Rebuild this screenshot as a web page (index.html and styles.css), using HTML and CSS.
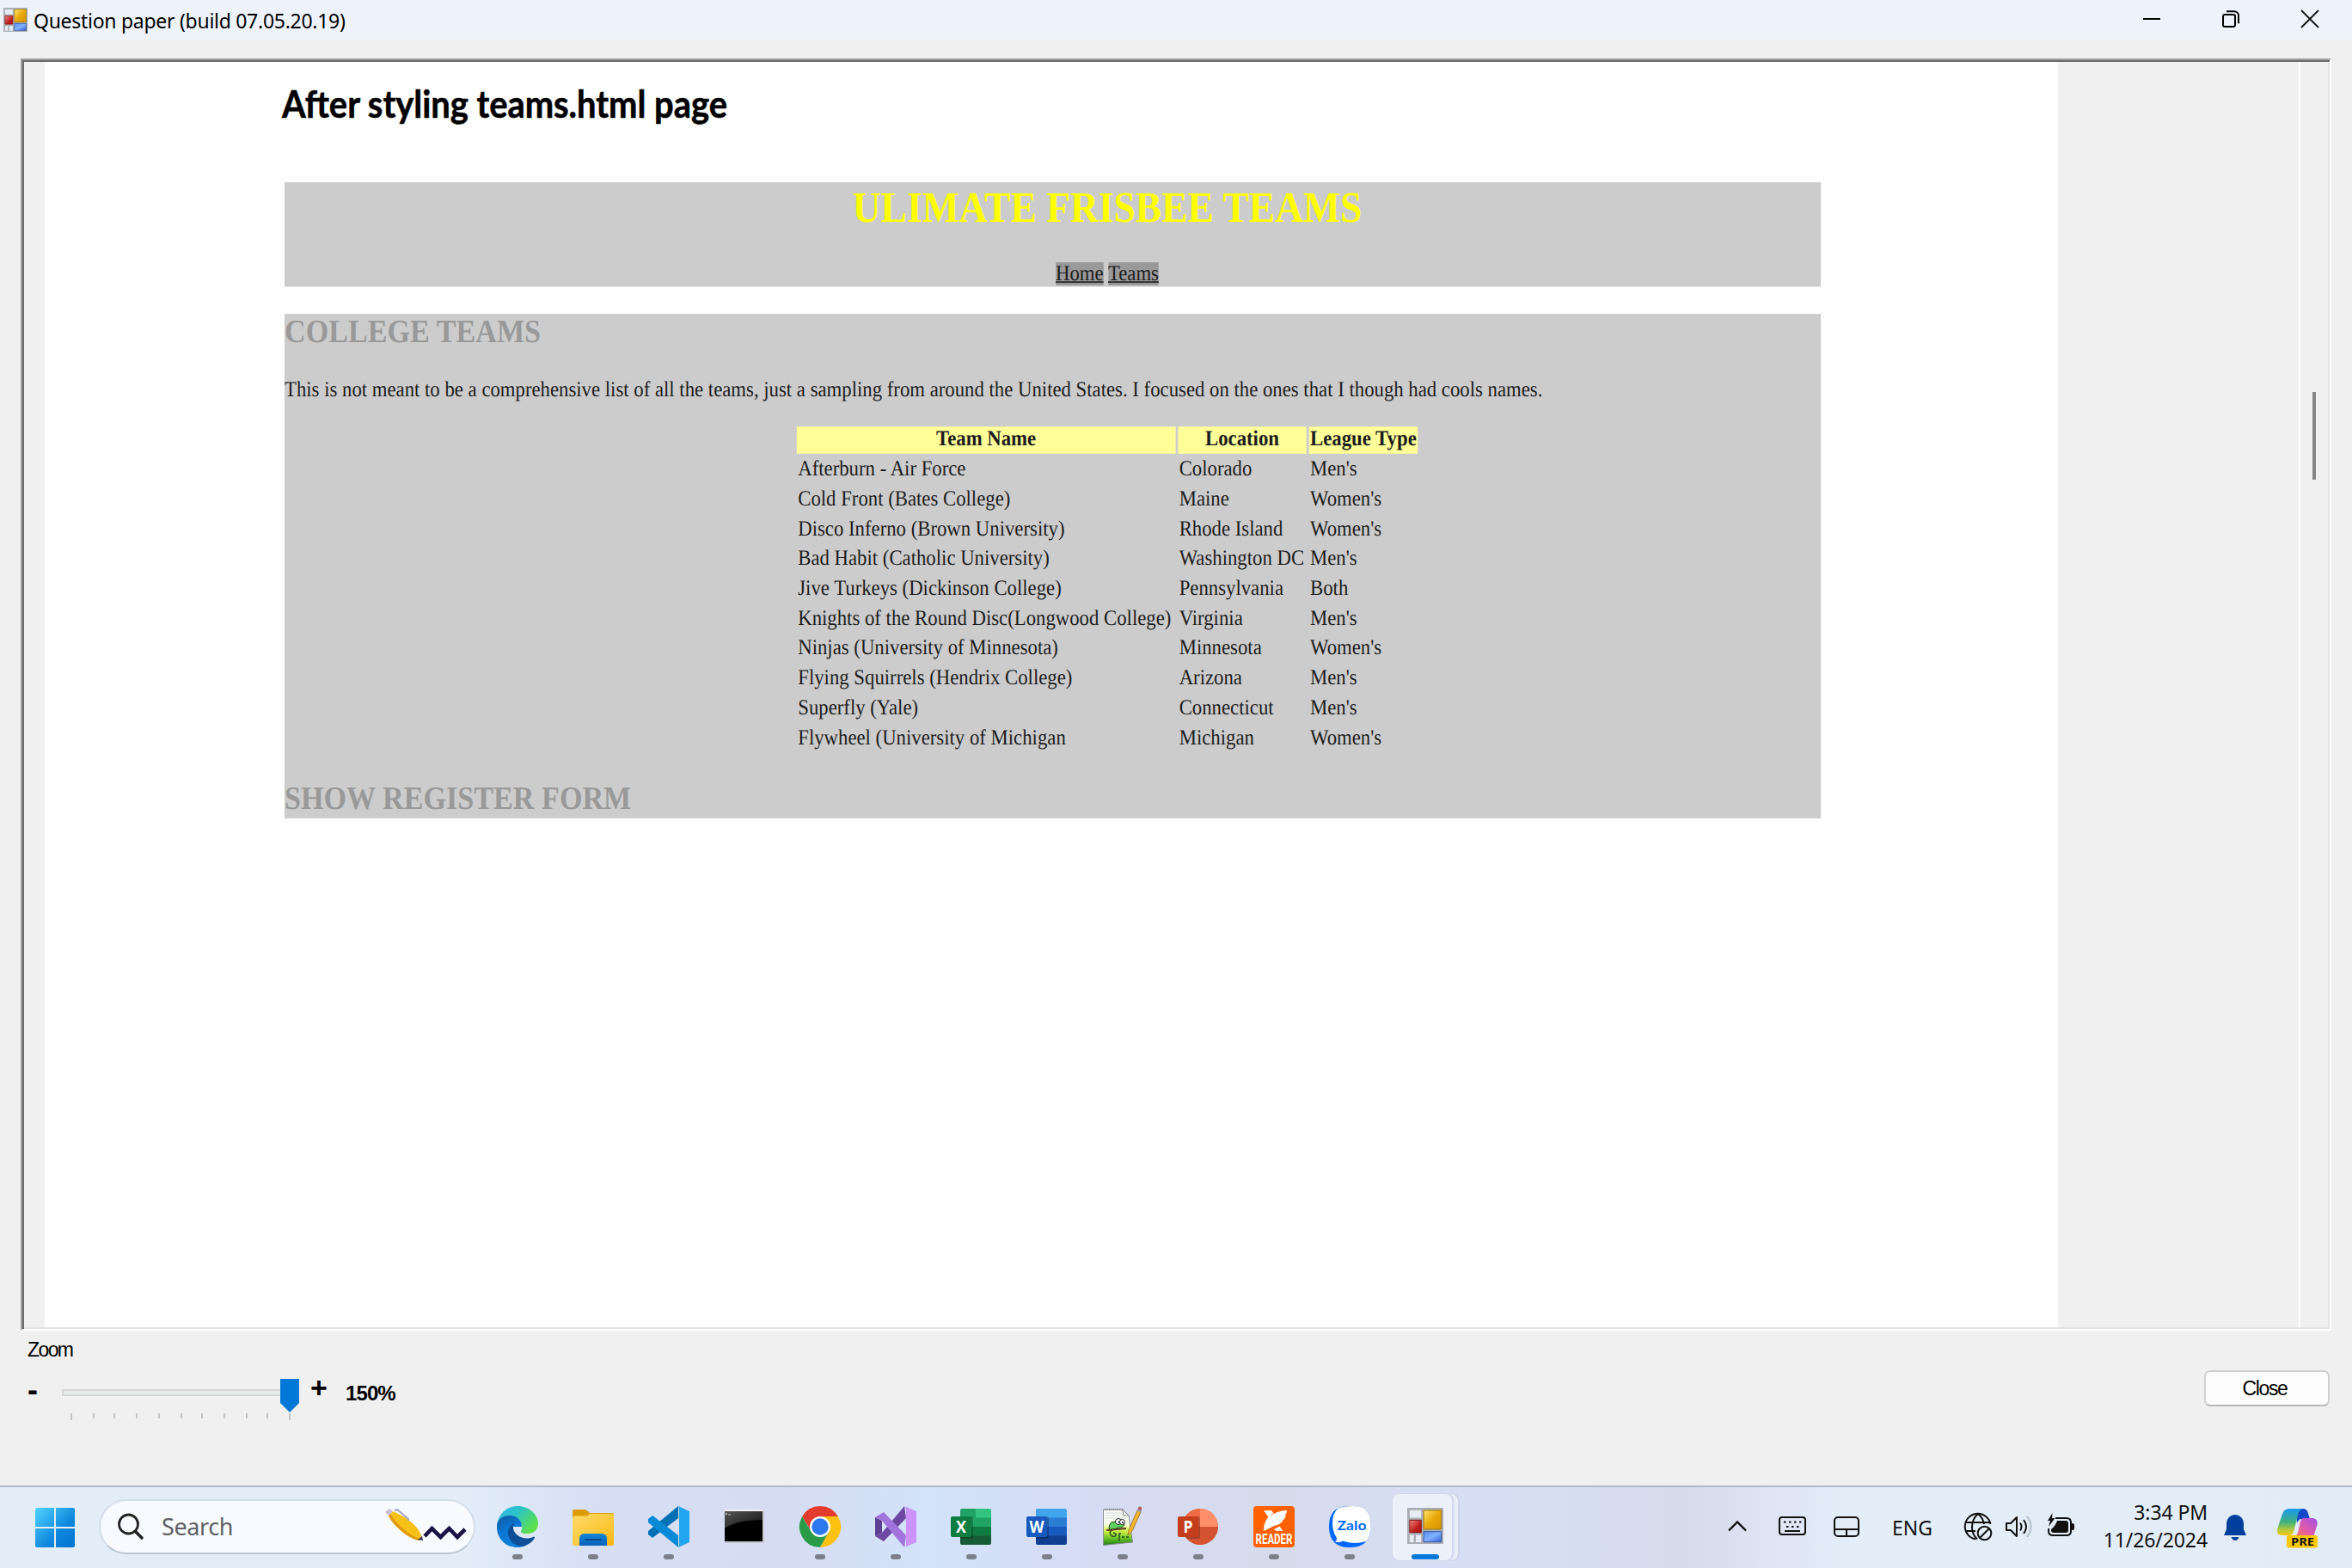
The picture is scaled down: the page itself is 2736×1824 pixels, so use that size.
FILE: index.html
```
<!DOCTYPE html>
<html lang="en">
<head>
<meta charset="utf-8">
<title>Question paper</title>
<link rel="stylesheet" href="styles.css">
</head>
<body>
<div class="window">
  <header class="titlebar">
    <svg class="title-icon" viewBox="0 0 44 44"><use href="#form-icon"/></svg>
    <span class="title-text">Question paper (build 07.05.20.19)</span>
    <div class="caption-buttons">
      <svg width="20" height="20" viewBox="0 0 20 20"><path d="M0 10h20" stroke="#000" stroke-width="2"/></svg>
      <svg width="20" height="20" viewBox="0 0 20 20" fill="none" stroke="#000" stroke-width="2"><rect x="1" y="5" width="14" height="14" rx="2"/><path d="M5 1.200h9a5 5 0 0 1 5 5v9"/></svg>
      <svg width="20" height="20" viewBox="0 0 20 20"><path d="M0 0L20 20M20 0L0 20" stroke="#111" stroke-width="1.800"/></svg>
    </div>
  </header>

  <main class="viewer">
    <div class="page">
      <h1 class="doc-title"><span>After styling teams.html page</span></h1>
      <div class="figure">
        <div class="site">
          <div class="site-header">
            <h1>ULIMATE FRISBEE TEAMS</h1>
            <nav><a>Home</a> <a>Teams</a></nav>
          </div>
          <div class="site-main">
            <h2>COLLEGE TEAMS</h2>
            <p>This is not meant to be a comprehensive list of all the teams, just a sampling from around the United States. I focused on the ones that I though had cools names.</p>
            <table>
              <tr><th class="c1">Team Name</th><th class="c2">Location</th><th class="c3">League Type</th></tr>
              <tr><td>Afterburn - Air Force</td><td>Colorado</td><td>Men's</td></tr>
              <tr><td>Cold Front (Bates College)</td><td>Maine</td><td>Women's</td></tr>
              <tr><td>Disco Inferno (Brown University)</td><td>Rhode Island</td><td>Women's</td></tr>
              <tr><td>Bad Habit (Catholic University)</td><td>Washington DC</td><td>Men's</td></tr>
              <tr><td>Jive Turkeys (Dickinson College)</td><td>Pennsylvania</td><td>Both</td></tr>
              <tr><td>Knights of the Round Disc(Longwood College)</td><td>Virginia</td><td>Men's</td></tr>
              <tr><td>Ninjas (University of Minnesota)</td><td>Minnesota</td><td>Women's</td></tr>
              <tr><td>Flying Squirrels (Hendrix College)</td><td>Arizona</td><td>Men's</td></tr>
              <tr><td>Superfly (Yale)</td><td>Connecticut</td><td>Men's</td></tr>
              <tr><td>Flywheel (University of Michigan</td><td>Michigan</td><td>Women's</td></tr>
            </table>
            <h2>SHOW REGISTER FORM</h2>
          </div>
        </div>
      </div>
    </div>
    <div class="scrollbar"><div class="thumb"></div></div>
  </main>

  <footer class="controls">
    <div class="zoom">
      <div class="zoom-label">Zoom</div>
      <div class="zoom-row">
        <span class="minus">-</span>
        <svg class="slider" width="280" height="52" viewBox="0 0 280 52">
          <rect x="1" y="13" width="262" height="6" fill="#e7eaea" stroke="#d6d6d6" stroke-width="2"/>
          <path d="M254 0h22v28l-11 11l-11-11z" fill="#0078d7"/>
          <path d="M11 40v8M265 40v8M37 40v6M61 40v6M87 40v6M113 40v6M139 40v6M163 40v6M189 40v6M215 40v6M239 40v6" stroke="#c4c4c4" stroke-width="2"/>
        </svg>
        <span class="plus">+</span>
        <span class="percent">150%</span>
      </div>
    </div>
    <button class="close-btn"><span>Close</span></button>
  </footer>
</div>

<div class="taskbar">
  <svg class="start" width="46" height="46" viewBox="0 0 46 46">
    <defs><linearGradient id="win" gradientUnits="userSpaceOnUse" x1="0" y1="0" x2="46" y2="46"><stop offset="0" stop-color="#4fd5ff"/><stop offset=".6" stop-color="#0f88dc"/><stop offset="1" stop-color="#0072d0"/></linearGradient></defs>
    <path fill="url(#win)" d="M2 0H22V22H0V2Q0 0 2 0zM24 0H44Q46 0 46 2V22H24zM0 24H22V46H2Q0 46 0 44zM24 24H46V44Q46 46 44 46H24z"/>
  </svg>

  <div class="search">
    <svg width="30" height="32" viewBox="0 0 30 32" fill="none" stroke="#222"><circle cx="12.500" cy="13" r="11" stroke-width="2.800"/><path d="M20.500 21.500L28 29" stroke-width="3.600" stroke-linecap="round"/></svg>
    <span>Search</span>
    <svg class="pen" width="96" height="40" viewBox="0 0 96 40">
      <path d="M5 9L10 4Q24 10 33 18Q42 26 44 35L41 38Q30 36 20 27Q8 17 5 9z" fill="#f6c116"/>
      <path d="M5 9Q8 17 20 27Q30 36 41 38L42.500 36.500Q32 33 24 26Q12 16 7 7z" fill="#e09a10"/>
      <path d="M1 5L6 1L10 4L5 9z" fill="#cdbbd8"/><path d="M12 3l3-1l13 11v2" fill="none" stroke="#a9a3c4" stroke-width="2"/>
      <path d="M44 33l-5 4l6 1z" fill="#3a3060"/>
      <path d="M47 33L55.500 24L65.500 34L75.500 24L85 34L94 25" fill="none" stroke="#1a1145" stroke-width="4.600" stroke-linejoin="miter"/>
    </svg>
  </div>

  <div class="apps">
    <div class="app"><svg viewBox="0 0 48 48">
      <defs><linearGradient id="e1" x1="0" y1="0" x2="1" y2=".6"><stop offset="0" stop-color="#35b5f5"/><stop offset=".45" stop-color="#2cc3c9"/><stop offset="1" stop-color="#5ee04a"/></linearGradient><linearGradient id="e2" x1="0" y1="0" x2=".5" y2="1"><stop offset="0" stop-color="#10569c"/><stop offset=".5" stop-color="#0a78d4"/><stop offset="1" stop-color="#1080dc"/></linearGradient></defs>
      <path fill="url(#e1)" d="M0 22C2 8 12 0 24 0C38 0 48 10 48 20C48 28 42 32 35 32C30 32 27 31 28 29C31 25 29 18 22 18L10 12z"/>
      <path fill="url(#e2)" d="M0 24C0 15 7 11 15 11C24 11 29 17 29 24L19 24C17 34 26 44 33 46C30 47.500 27 48 24 48C10 48 0 38 0 24z"/>
      <path fill="#0f4f98" d="M22 18.500C15 22 12 27 13 33C14.500 42 24 49 33 46C38 44 42 41 44 37C44.500 35.500 43.500 35.500 42 36C31 41 19 33 19 25C19 22 20 20 22 18.500z"/>
    </svg><i></i></div>
    <div class="app"><svg viewBox="0 0 48 48">
      <defs><linearGradient id="f1" x1="0" y1="0" x2="1" y2="1"><stop offset="0" stop-color="#ffd968"/><stop offset=".6" stop-color="#fcc838"/><stop offset="1" stop-color="#f5b312"/></linearGradient><linearGradient id="f2" x1="0" y1="0" x2="0" y2="1"><stop offset="0" stop-color="#1286d8"/><stop offset="1" stop-color="#0a62ba"/></linearGradient></defs>
      <path fill="#dd9c06" d="M0 6Q0 4 2 4H14Q16 4 18 6L20 8H46Q48 8 48 10V20H0z"/>
      <path fill="url(#f1)" d="M0 13Q0 11.500 2 11.500H16Q18 11.500 20 9H46Q48 9 48 11V44Q48 46 46 46H2Q0 46 0 44z"/>
      <path fill="url(#f2)" d="M8 46V38Q8 32 14 32H34Q40 32 40 38V46z"/><path d="M15 39H33" stroke="#0a4a8c" stroke-width="2" stroke-linecap="round"/>
    </svg><i></i></div>
    <div class="app"><svg viewBox="0 0 48 48">
      <path fill="#0070b4" d="M35 0V14L5 37L0 33V29z"/><path fill="#0a8ad6" d="M0 15L5 11L35 34V48L0 19z"/><path fill="#23a4f0" d="M35 0L48 6V42L35 48Q36 47 36 45V3Q36 1 35 0z"/>
    </svg><i></i></div>
    <div class="app"><svg viewBox="0 0 48 48">
      <defs><linearGradient id="cm" x1="0" y1="0" x2="1" y2="1"><stop offset="0" stop-color="#555"/><stop offset="1" stop-color="#111"/></linearGradient></defs>
      <path fill="#c8c8cc" d="M1 4H47V43H1z"/><path fill="#f0f2f5" d="M1 4H46V6H1z"/><path fill="#000" d="M1 6H45V41H1z"/><path fill="url(#cm)" d="M1 6H45V16Q14 16 1 26z"/><path d="M2 8l2 1l-2 1M5 10h3" stroke="#ddd" stroke-width=".8" fill="none"/>
    </svg></div>
    <div class="app"><svg viewBox="0 0 48 48">
      <path fill="#e33b2e" d="M3.200 12A24 24 0 0 1 44.800 12H24L14 30z"/><path fill="#2a9a48" d="M3.200 12A24 24 0 0 0 24 48L34.400 30L24 34L13.600 30z"/><path fill="#fdc112" d="M44.800 12A24 24 0 0 1 24 48L34.400 30L24 12z"/>
      <circle cx="24" cy="24" r="12" fill="#fff"/><circle cx="24" cy="24" r="9.700" fill="#2c78ee"/>
    </svg><i></i></div>
    <div class="app"><svg viewBox="0 0 48 48">
      <path fill="#5c3f92" d="M0 13L8 17V31L0 35z"/><path fill="#6d48a2" d="M34 0L36 14L10 41L0 35L8 31z"/><path fill="#a074dc" d="M0 13L10 7L36 34L34 48L8 17z"/><path fill="#cc92fa" d="M34 0L48 6V42L34 48Q36 47 36 44V4Q36 1 34 0z"/>
    </svg><i></i></div>
    <div class="app"><svg viewBox="0 0 48 48">
      <path fill="#21a366" d="M11 5Q11 3 13 3H30V14H11z"/><path fill="#33c481" d="M29 3H45Q47 3 47 5V14H29z"/><path fill="#21a366" d="M11 13.500H47V24.500H11z"/><path fill="#107c41" d="M11 24H47V35H11z"/><path fill="#185c37" d="M11 34.500H47V43Q47 45 45 45H13Q11 45 11 43z"/>
      <path fill="#000" opacity=".22" d="M11 12H24Q26 12 26 14V36Q26 38 24 38H11z"/><rect y="12" width="24" height="24" rx="2" fill="#107c41"/><text class="tile-letter" x="12" y="31" textLength="12" lengthAdjust="spacingAndGlyphs">X</text>
    </svg><i></i></div>
    <div class="app"><svg viewBox="0 0 48 48">
      <path fill="#41a5ee" d="M11 5Q11 3 13 3H45Q47 3 47 5V14H11z"/><path fill="#2b7cd3" d="M11 13.500H47V24.500H11z"/><path fill="#185abd" d="M11 24H47V35H11z"/><path fill="#103f91" d="M11 34.500H47V43Q47 45 45 45H13Q11 45 11 43z"/>
      <path fill="#000" opacity=".22" d="M11 12H24Q26 12 26 14V36Q26 38 24 38H11z"/><rect y="12" width="24" height="24" rx="2" fill="#185abd"/><text class="tile-letter" x="12" y="31" textLength="17" lengthAdjust="spacingAndGlyphs">W</text>
    </svg><i></i></div>
    <div class="app"><svg viewBox="0 0 48 48">
      <defs><linearGradient id="np" x1="0" y1="0" x2="0" y2="1"><stop offset="0" stop-color="#fff"/><stop offset=".4" stop-color="#fafde8"/><stop offset=".6" stop-color="#d4f04a"/><stop offset=".8" stop-color="#6cc428"/><stop offset="1" stop-color="#1c7a14"/></linearGradient></defs>
      <path fill="url(#np)" stroke="#8a8f96" stroke-width="1" d="M1.500 4H24L31 11L35.500 42L1.500 45.500z"/><path d="M3 4H24" stroke="#777" stroke-width="2.500" stroke-dasharray="1 1.500"/>
      <path d="M4 8H24M4 11H27M4 14H30" stroke="#c9ced8" stroke-width=".8"/><path fill="#e8e8e8" stroke="#777" stroke-width=".8" d="M24 4L31 11H25z"/>
      <path fill="#5fd060" stroke="#1d4a18" stroke-width="1" d="M8 26Q8 18 15 18Q25 16 26 21Q25 26 18 25L13 28Q9 28 8 26z"/><circle cx="19" cy="18" r="3.500" fill="#fff" stroke="#222"/><circle cx="23.500" cy="18.500" r="3" fill="#fff" stroke="#222"/><circle cx="19.500" cy="18.500" r=".9"/><circle cx="24" cy="19" r=".9"/>
      <path fill="none" stroke="#5a3a20" stroke-width="1.800" d="M5 28L28 26"/><path fill="none" stroke="#244a18" stroke-width="1.500" d="M11 28Q7 32 12 35Q17 36 16 32L13 31M20 40V32H22M23 36H26M28 36H31"/>
      <path fill="#f4b62c" stroke="#9a6a1c" stroke-width=".8" d="M41 5L45 7L35 29L30 34L31 28z"/><path fill="#b85c60" d="M42.500 1Q44 0 46 1.500V4.500L45 7L41 5z"/><path fill="#9aa0b0" d="M41.700 3.500L45.800 5.500L45 7.500L41 5.500z"/>
    </svg><i></i></div>
    <div class="app"><svg viewBox="0 0 48 48">
      <circle cx="26" cy="24" r="21" fill="#d35230"/><path fill="#ed6c47" d="M26 3A21 21 0 0 0 5 24H26z"/><path fill="#ff8f6b" d="M26 3A21 21 0 0 1 47 24H26z"/>
      <path fill="#000" opacity=".2" d="M6 12H24Q26 12 26 14V36Q26 38 24 38H11Q6 34 6 30z"/><rect y="12" width="24" height="24" rx="2" fill="#c43e1c"/><text class="tile-letter" x="12" y="31" textLength="11" lengthAdjust="spacingAndGlyphs">P</text>
    </svg><i></i></div>
    <div class="app"><svg viewBox="0 0 48 48">
      <rect width="48" height="48" rx="4" fill="#ff6000"/>
      <path fill="#fff" d="M12 5H21L23.500 8.500Q20 10 17.500 13zM39 5Q39.500 8 36.500 11L38 10.500Q37 15 33.500 17L34.500 17Q31 22 24 23L12 29Q12 14 22 10Q30 5 39 5zM24 27L30.500 23.500L34.500 29H27z"/>
      <text class="reader" x="24" y="43.500" textLength="43" lengthAdjust="spacingAndGlyphs">READER</text>
    </svg><i></i></div>
    <div class="app"><svg viewBox="0 0 48 48">
      <path fill="#0068ff" d="M22 0H26Q48 0 48 22V26Q48 48 24 48Q0 48 0 24Q0 0 22 0z"/><path fill="#fff" d="M11 2Q18 0 27 0Q48 0 48 20V28Q47 38 43 41Q28 45 16 40.500Q12 43 7 41.500Q9.500 40 9 37Q4 30 4 20Q4 8 11 2z"/>
      <text class="zalo" x="26.500" y="28" textLength="34" lengthAdjust="spacingAndGlyphs">Zalo</text>
    </svg><i></i></div>
    <div class="app active"><svg viewBox="0 0 44 44">
      <defs><linearGradient id="q1" x1="0" y1="0" x2="1" y2="1"><stop offset="0" stop-color="#ffe36b"/><stop offset=".5" stop-color="#e8a90c"/><stop offset="1" stop-color="#d89500"/></linearGradient><linearGradient id="q2" x1="0" y1="0" x2="1" y2="1"><stop offset="0" stop-color="#f08a80"/><stop offset=".6" stop-color="#c02020"/><stop offset="1" stop-color="#b01010"/></linearGradient><linearGradient id="q3" x1="0" y1="0" x2="1" y2="1"><stop offset="0" stop-color="#5a90f0"/><stop offset=".5" stop-color="#80b0ff"/><stop offset="1" stop-color="#2f62d8"/></linearGradient>
      <g id="form-icon"><path fill="#a9adb4" d="M0 0H44V44H0z"/><path fill="#e8ecf4" d="M3 3H17V12H3zM3 33H8V42H3zM10.500 33H17V42H10.500z"/><path fill="url(#q1)" stroke="#a87400" d="M20 3H41.500V26H20z"/><path fill="url(#q2)" stroke="#801010" d="M3 15H17V30H3z"/><path fill="url(#q3)" stroke="#3355a5" d="M20 29H41.500V41.500H20z"/></g></defs>
      <use href="#form-icon"/>
    </svg><i></i></div>
  </div>

  <div class="tray">
    <svg class="chev" width="22" height="12" viewBox="0 0 22 12" fill="none" stroke="#111" stroke-width="2.400"><path d="M1 11.500L11 1.500L21 11.500"/></svg>
    <svg class="kbd" width="32" height="22" viewBox="0 0 32 22" fill="none" stroke="#111" stroke-width="2"><rect x="1" y="1" width="30" height="20" rx="3"/><path d="M6 6.500h2.500M12 6.500h2.500M18 6.500h2.500M24 6.500h2.500M9 12h2.500M15 12h2.500M21 12h2.500M7 17h18"/></svg>
    <svg class="pad" width="30" height="24" viewBox="0 0 30 24" fill="none" stroke="#111" stroke-width="2"><rect x="1" y="1" width="28" height="22" rx="4"/><path d="M1 15h28M15 15v8"/></svg>
    <span class="lang">ENG</span>
    <svg class="globe" width="32" height="32" viewBox="0 0 32 32" fill="none" stroke="#111" stroke-width="2"><path d="M30.500 13A15 15 0 1 0 13 30.500M2 11h28M2 21h11M16 1Q9 7 9 16T15 30.500M16 1Q22 6 23 13"/><circle cx="23.500" cy="23.500" r="7.800"/><path d="M18.500 28.500L28.500 18.500"/></svg>
    <svg class="vol" width="32" height="26" viewBox="0 0 32 26" fill="none" stroke="#111" stroke-width="2"><path d="M1 9H6L13 2V24L6 17H1z" stroke-linejoin="round"/><path d="M17 8.500Q20 13 17 17.500M21 5Q27 13 21 21"/><path d="M25 1Q34 13 25 25" stroke="#b6bfc9"/></svg>
    <svg class="bat" width="32" height="28" viewBox="0 0 32 28"><path d="M10 6H23Q28 6 28 11V21Q28 26 23 26H7Q2 26 2 21V18" fill="none" stroke="#111" stroke-width="2"/><path fill="#111" d="M28 12H30Q32 12 32 14V18Q32 20 30 20H28zM12 9H22Q25 9 25 12V20Q25 23 22 23H8Q5 23 5 20V19Q10 15 12 9zM6.500 0L1 9H4L2 16L9.500 6H6z"/></svg>
    <div class="clock"><div>3:34 PM</div><div>11/26/2024</div></div>
    <svg class="bell" width="26" height="30" viewBox="0 0 26 30" fill="#00409c"><path d="M3 10A10 10 0 0 1 23 10V17L26 24H0L3 17zM8.500 26H17.500Q16 30 13 30T8.500 26z"/></svg>
    <svg class="copilot" width="47" height="46" viewBox="0 0 47 46">
      <defs><linearGradient id="c1" x1="0" y1="0" x2="0" y2="1"><stop offset="0" stop-color="#1b9af0"/><stop offset=".5" stop-color="#3fb07c"/><stop offset=".8" stop-color="#b8c838"/><stop offset="1" stop-color="#f5c816"/></linearGradient><linearGradient id="c2" x1="1" y1="0" x2="0" y2="1"><stop offset="0" stop-color="#a04ee8"/><stop offset=".5" stop-color="#dc5cae"/><stop offset="1" stop-color="#ff7a50"/></linearGradient></defs>
      <path fill="#1648c8" d="M22 0H30Q34 0 35.500 4L38 12H28Q25 12 23 17z"/><path fill="url(#c1)" d="M14 0H30Q26 0 24 8L19 27Q18 31 14 31H6Q-1 31 0 24L6 6Q8 0 14 0z"/><path fill="url(#c2)" d="M30 11H40Q48 11 46.500 19L42 33H17Q22 33 24 28L27 15Q28 11 30 11z"/>
      <rect x="11" y="31" width="36" height="14.500" rx="2.500" fill="#ffc800"/><text class="pre" x="29.500" y="43" textLength="27" lengthAdjust="spacingAndGlyphs">PRE</text>
    </svg>
  </div>
</div>
</body>
</html>
```
FILE: styles.css
```
* { box-sizing: border-box; }
body { margin: 0; width: 2736px; height: 1824px; overflow: hidden; background: #f0f0f0; display: flex; flex-direction: column; font-family: "Noto Sans", sans-serif; color: #000; }
svg { display: block; flex: none; overflow: visible; }
.window { height: 1728px; display: flex; flex-direction: column; }

.titlebar { height: 46px; background: #eef3fb; display: flex; align-items: flex-start; padding: 0 39px 0 4px; flex: none; }
.title-icon { width: 28px; height: 28px; margin-top: 9px; }
.title-text { margin-left: 7px; font-size: 23px; line-height: 32px; margin-top: 8px; letter-spacing: -0.28px; white-space: nowrap; }
.caption-buttons { margin: 12px 0 0 auto; display: flex; gap: 72px; }

.viewer { margin: 22px 24px 0 24px; height: 1480px; flex: none; display: flex; border: 2px solid; border-color: #a0a0a0 #fff #fff #a0a0a0; box-shadow: inset 2px 2px #696969, inset -2px -2px #e3e3e3; padding: 2px 2px 2px 26px; }
.page { width: 2342px; background: #fff; padding: 22px 0 0 276px; flex: none; }
.doc-title { margin: 0; height: 118px; font: bold 44px/52px Lato, sans-serif; white-space: nowrap; }
.doc-title span { display: inline-block; transform: scaleX(.906); transform-origin: 0 0; -webkit-text-stroke: .6px #000; }
.scrollbar { margin-left: auto; width: 34px; border-left: 2px solid #fff; padding: 384px 0 0 14px; }
.thumb { width: 4px; height: 102px; background: #858585; }

/* the embedded web page, stretched to the paper's width */
.figure { width: 1787px; height: 740px; margin-left: 3px; overflow: hidden; }
.site { width: 1346px; transform: scale(1.422, 1.579); transform-origin: 0 0; font: 16px/18px "Liberation Serif", serif; color: #1c1c1c; text-rendering: geometricPrecision; }
.site-header { background: #ccc; text-align: center; height: 77px; margin-bottom: 20px; }
.site h1 { margin: 0 0 21.6px; font-size: 32px; line-height: 37px; color: #ff0; }
.site a { background: #999; text-decoration: underline; }
.site-main { background: #ccc; height: 372px; }
.site h2 { margin: 0; font-size: 24px; line-height: 27px; padding-top: .6px; color: #999; }
.site p { margin: 20px 0 15.4px; white-space: nowrap; }
.site table { margin: 0 auto 19.6px; border-spacing: 2.7px 2px; table-layout: fixed; width: 512px; }
.site td, .site th { padding: 1.5px 1px .5px; white-space: nowrap; }
.site th { background: #ff9; }
.c1 { width: 308px; }
.c2 { width: 104.500px; }
.c3 { width: 88.500px; }

.controls { display: flex; justify-content: space-between; align-items: flex-start; padding: 8px 26px 0 32px; font-family: "Liberation Sans", sans-serif; }
.zoom-label { font-size: 23px; line-height: 28px; letter-spacing: -1.6px; }
.zoom-row { display: flex; margin-top: 20px; height: 52px; }
.minus { width: 40px; font: bold 36px/26px "Liberation Sans", sans-serif; }
.plus { font: bold 34px/28px "Liberation Sans", sans-serif; margin: -4px 0 0 9px; width: 41px; }
.percent { font-size: 24px; font-weight: bold; line-height: 34px; letter-spacing: -.9px; }
.close-btn { width: 146px; height: 42px; margin-top: 38px; border: 2px solid #d0d0d0; border-bottom-color: #b8b8b8; border-radius: 7px; background: #fdfdfd; font: 23px "Liberation Sans", sans-serif; letter-spacing: -1.4px; color: #000; padding: 0 5px 0 0; }

.taskbar { height: 96px; flex: none; border-top: 2px solid #b2bac7; display: flex; align-items: flex-start; background: linear-gradient(90deg, #e2edf8 0, #e2edf8 540px, #d7e0f5 680px, #d6dcf2 900px, #d3e3fa 1080px, #d6dcf5 1260px, #d6dbeb 1480px, #d7dff5 1720px, #d5dbea 1960px, #e0e6f4 2080px, #e3eef8 2160px, #e2ecf7 100%); }
.start { margin: 24px 0 0 41px; }
.search { margin: 14px 0 0 28px; width: 438px; height: 64px; border-radius: 32px; background: #f7faff; border: 2px solid #d4deeb; border-bottom-color: #bcc7d4; display: flex; align-items: center; padding: 0 8px 0 20px; font-size: 27px; color: #5d5f63; letter-spacing: -.4px; }
.search span { margin-left: 21px; margin-top: -2px; }
.pen { margin: -4px 0 0 auto; }
.apps { display: flex; gap: 20px; margin: 8px 0 0 15px; }
.app { width: 68px; height: 77px; display: flex; flex-direction: column; align-items: center; justify-content: space-between; padding: 14px 0 1px; }
.app svg { width: 48px; height: 48px; }
.app i { width: 12px; height: 6px; border-radius: 3px; background: #7b808b; }
.app.active { margin-left: -4px; width: 69px; padding-left: 7px; background: #ecf0fa; border-radius: 8px; box-shadow: 0 0 0 1px #d0d7e8, 2px 0 0 1px #d6def3, 7px 0 0 0 #e8edf9, 8px 0 0 1px #ccd4e6; }
.app.active svg { width: 44px; height: 42px; margin-top: 2px; }
.app.active i { width: 32px; background: #0078d7; }
.tile-letter { font: bold 20px "Open Sans", sans-serif; fill: #fff; text-anchor: middle; }
.reader { font: bold 16px Roboto, sans-serif; fill: #fff; text-anchor: middle; }
.zalo { font: bold 16px Lato, sans-serif; fill: #0068ff; text-anchor: middle; }
.pre { font: bold 13px "Open Sans", sans-serif; fill: #111; text-anchor: middle; }

.tray { margin-left: auto; margin-right: 40px; display: flex; color: #111; }
.chev { margin-top: 39px; }
.kbd { margin: 34px 0 0 37px; }
.pad { margin: 34px 0 0 32px; }
.lang { margin: 29px 0 0 38px; width: 47px; font-size: 23px; line-height: 36px; }
.globe { margin: 30px 0 0 37px; }
.vol { margin: 33px 0 0 16px; }
.bat { margin: 30px 0 0 16px; }
.clock { margin: 13px 0 0 33px; width: 122px; font-size: 23px; line-height: 32px; letter-spacing: -.1px; white-space: nowrap; display: flex; flex-direction: column; align-items: flex-end; }
.bell { margin: 32px 0 0 19px; }
.copilot { margin: 25px 0 0 36px; }
```
